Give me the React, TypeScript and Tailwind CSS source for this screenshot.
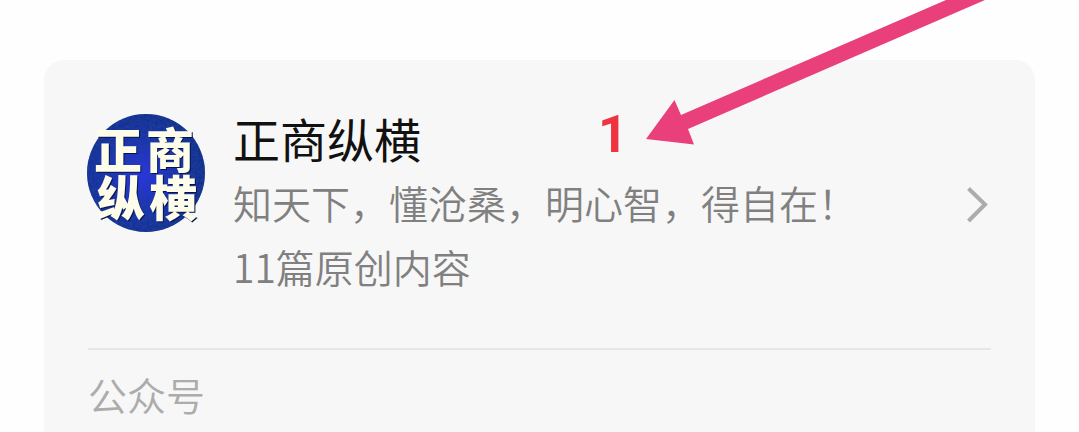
import React from "react";

const account = {
  name: "正商纵横",
  motto: "知天下，懂沧桑，明心智，得自在！",
  posts: "11篇原创内容",
  kind: "公众号",
};

function Avatar() {
  return (
    <svg viewBox="0 0 118 118" className="size-[118px] shrink-0 overflow-visible" role="img" aria-label={account.name}>
      <defs>
        <radialGradient id="glow" cx="46%" cy="52%" r="52%">
          <stop offset="0%" stopColor="#2c34f0" />
          <stop offset="45%" stopColor="#1c34bc" />
          <stop offset="100%" stopColor="#10328f" />
        </radialGradient>
        <filter id="leather" x="0" y="0" width="100%" height="100%">
          <feTurbulence type="fractalNoise" baseFrequency="0.35" numOctaves="2" seed="4" />
          <feColorMatrix values="0 0 0 0 0.02  0 0 0 0 0.05  0 0 0 0 0.3  1.8 0 0 0 -0.65" />
          <feComposite in2="SourceGraphic" operator="in" />
        </filter>
      </defs>
      <circle cx="59" cy="59" r="59" fill="url(#glow)" />
      <circle cx="59" cy="59" r="59" filter="url(#leather)" />
      <g
        className="font-['Noto_Sans_CJK_SC',sans-serif] text-[48px] font-black drop-shadow-[1px_1px_0_#06154c]"
        textAnchor="middle"
        fill="#fdfdea"
      >
        <text x="31 83" y="54">正商</text>
        <text x="34 86" y="102">纵横</text>
      </g>
    </svg>
  );
}

export default function App() {
  return (
    <main className="relative min-h-screen overflow-hidden bg-[#fefefe] px-11 pt-[60px] font-['Noto_Sans_CJK_SC',sans-serif]">
      <article className="min-h-[372px] rounded-t-[20px] bg-[#f7f7f7] px-11">
        <a href="#profile" className="flex items-start pt-[54px]">
          <span className="-ml-px flex">
            <Avatar />
          </span>
          <div className="ml-7 min-w-0 grow">
            <h1 className="mb-2 text-[47px] leading-[48px] font-normal text-[#111111]">{account.name}</h1>
            <p className="text-[39px] leading-[64px] font-[350] whitespace-nowrap text-[#808080]">{account.motto}</p>
            <p className="text-[39px] leading-[64px] font-[350] text-[#808080]">{account.posts}</p>
          </div>
          <svg viewBox="0 0 24 38" className="mt-[72px] h-[38px] w-6 shrink-0" fill="none" stroke="#acacac" strokeWidth="4" aria-hidden="true">
            <path d="M1.5 2.5 18 18.5 1.5 35" />
          </svg>
        </a>
        <footer className="mt-[50px] border-t-2 border-[#e6e6e6] pt-3.5 text-[39px] leading-[60px] font-[350] text-[#acacac]">
          {account.kind}
        </footer>
      </article>

      <strong className="absolute top-[109px] left-[598px] font-['Roboto',sans-serif] text-[52px] leading-[52px] font-bold text-[#ed3440]">
        1
      </strong>
      <svg viewBox="0 0 340 146" className="absolute top-0 left-[645px] h-[146px] w-[340px]" aria-hidden="true">
        <path d="M1 139 29.5 100 36 115 301 0H340L43 129 49 144.5Z" fill="#e9407c" />
      </svg>
    </main>
  );
}
